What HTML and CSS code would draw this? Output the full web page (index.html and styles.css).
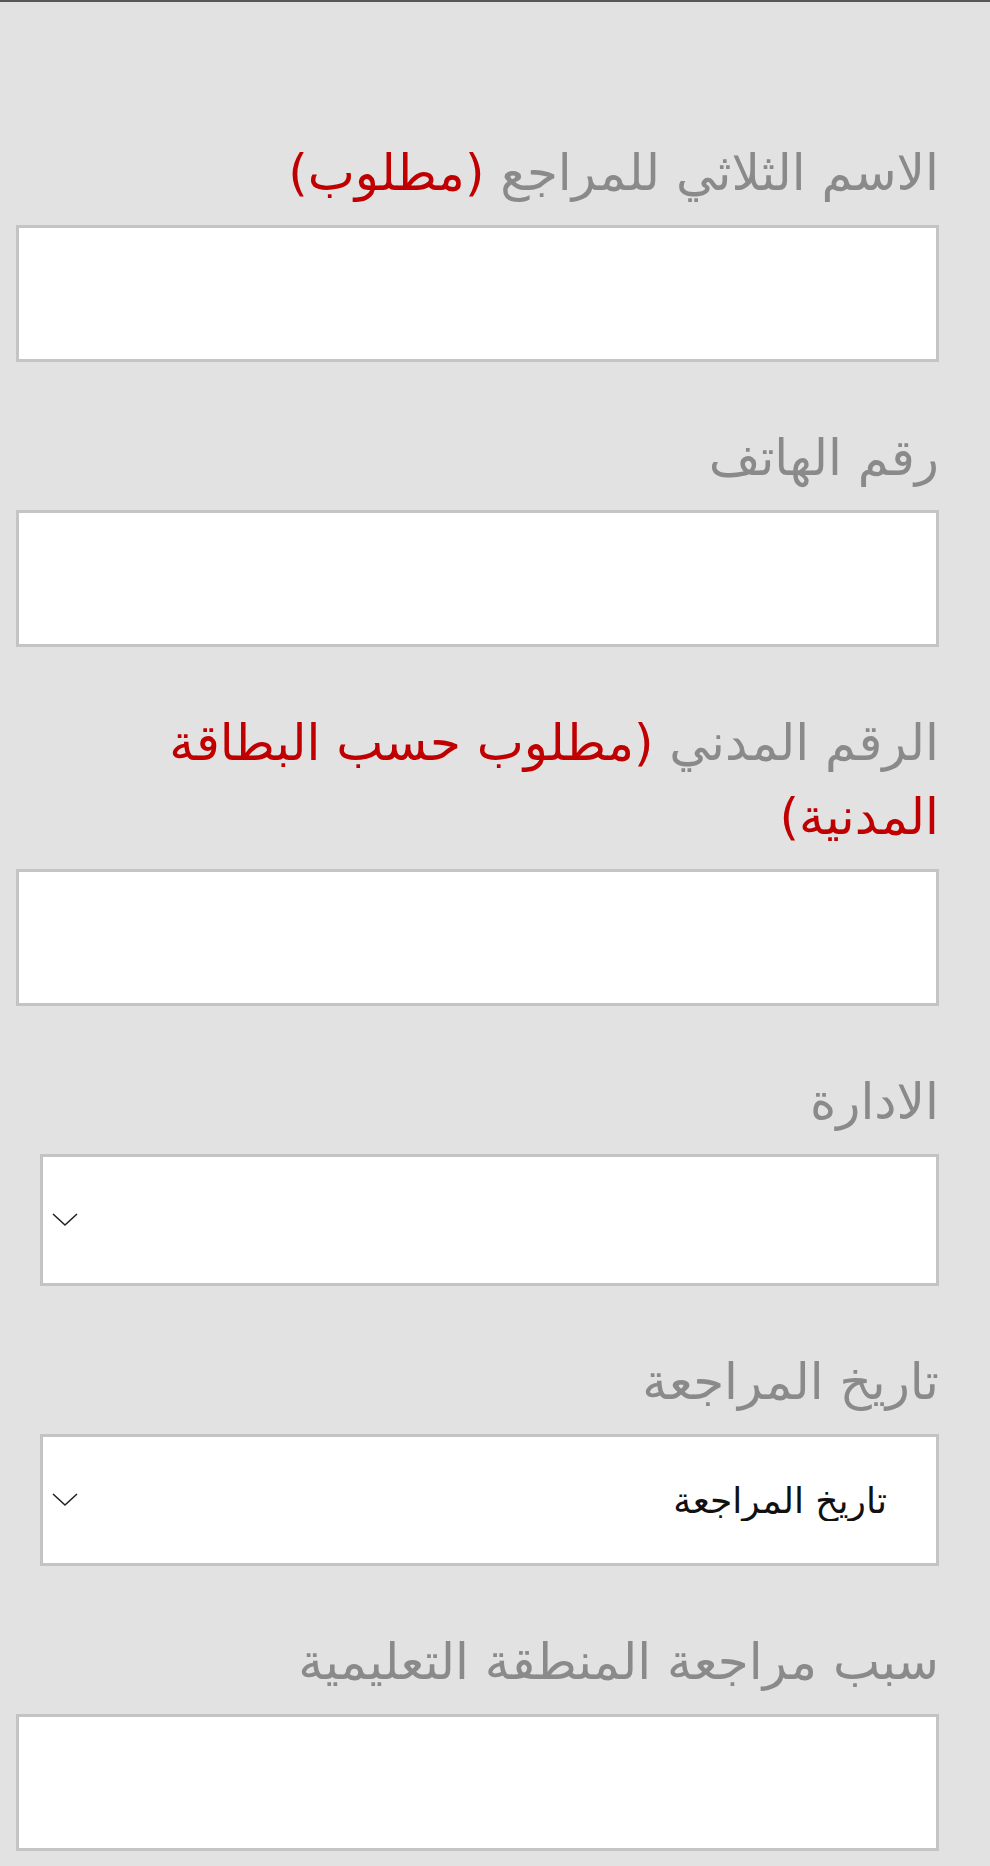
FILE: index.html
```html
<!DOCTYPE html>
<html lang="ar" dir="rtl">
<head>
  <meta charset="UTF-8">
  <title>نموذج المراجعة</title>
  <link rel="stylesheet" href="styles.css">
</head>
<body>
  <form class="visit-form">
    <div class="field">
      <label for="full-name">الاسم الثلاثي للمراجع <span class="required">(مطلوب)</span></label>
      <input type="text" id="full-name" class="text-input">
    </div>

    <div class="field">
      <label for="phone">رقم الهاتف</label>
      <input type="tel" id="phone" class="text-input">
    </div>

    <div class="field">
      <label for="civil-id">الرقم المدني <span class="required">(مطلوب حسب البطاقة</span> <span class="required">المدنية)</span></label>
      <input type="text" id="civil-id" class="text-input">
    </div>

    <div class="field">
      <label for="department">الادارة</label>
      <div class="select-wrap">
        <select id="department" class="select-input">
          <option value=""></option>
        </select>
        <svg class="chevron" width="26" height="14" viewBox="0 0 26 14"><path d="M1 1 L13 12 L25 1" fill="none" stroke="#222" stroke-width="1.6"/></svg>
      </div>
    </div>

    <div class="field">
      <label for="visit-date">تاريخ المراجعة</label>
      <div class="select-wrap">
        <select id="visit-date" class="select-input">
          <option value="">تاريخ المراجعة</option>
        </select>
        <svg class="chevron" width="26" height="14" viewBox="0 0 26 14"><path d="M1 1 L13 12 L25 1" fill="none" stroke="#222" stroke-width="1.6"/></svg>
      </div>
    </div>

    <div class="field">
      <label for="reason">سبب مراجعة المنطقة التعليمية</label>
      <input type="text" id="reason" class="text-input">
    </div>
  </form>
</body>
</html>
```

FILE: styles.css
```css
* {
  box-sizing: border-box;
  margin: 0;
  padding: 0;
}

body {
  font-family: 'DejaVu Sans', sans-serif;
  background: #e2e2e2;
  border-top: 2px solid #575757;
  min-height: 100vh;
}

.visit-form {
  padding: 75px 51px 0 16px;
}

.field label {
  display: block;
  margin: 59px 0 15px;
  font-size: 50px;
  line-height: 74px;
  color: #8a8a8a;
}

.field .required {
  color: #c00000;
}

.text-input {
  display: block;
  width: 100%;
  height: 137px;
  border: 3px solid #c4c4c4;
  background: #fff;
  outline: none;
}

.select-wrap {
  position: relative;
  margin-left: 24px;
}

.select-input {
  display: block;
  width: 100%;
  height: 132px;
  border: 3px solid #c4c4c4;
  border-radius: 0;
  background: #fff;
  appearance: none;
  -webkit-appearance: none;
  padding: 0 49px 0 60px;
  font-family: 'DejaVu Sans', sans-serif;
  font-size: 36px;
  color: #111;
  outline: none;
}

.chevron {
  position: absolute;
  left: 12px;
  top: 50%;
  margin-top: -7px;
  pointer-events: none;
}
```
